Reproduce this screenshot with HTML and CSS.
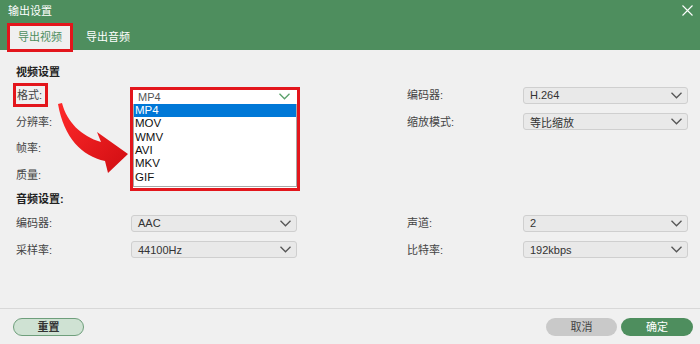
FILE: index.html
```html
<!DOCTYPE html>
<html lang="zh-CN">
<head>
<meta charset="utf-8">
<title>输出设置</title>
<link rel="stylesheet" href="styles.css">
</head>
<body>
<div class="dialog">
  <header class="titlebar">
    <div class="title-row">
      <span class="title">输出设置</span>
      <svg class="close" width="11" height="11" viewBox="0 0 11 11"><path d="M0.5 0.5 L10.5 10.5 M10.5 0.5 L0.5 10.5" stroke="#ffffff" stroke-width="1.1" fill="none"/></svg>
    </div>
    <div class="tabs">
      <div class="tab active">导出视频</div>
      <div class="tab">导出音频</div>
    </div>
  </header>

  <main class="content">
    <section class="group">
      <div class="group-title">视频设置</div>
      <div class="grid">
        <div class="label"><span class="mark">格式:</span></div>
        <div class="cell">
          <div class="select"><span>MP4</span><svg class="chev" width="11" height="7" viewBox="0 0 11 7"><path d="M0.5 0.8 L5.5 5.8 L10.5 0.8" stroke="#555" stroke-width="1.3" fill="none"/></svg></div>
          <div class="dropdown">
            <div class="dd-head"><span>MP4</span><svg width="11" height="7" viewBox="0 0 11 7"><path d="M0.5 0.8 L5.5 5.8 L10.5 0.8" stroke="#5aa06a" stroke-width="1.3" fill="none"/></svg></div>
            <ul class="dd-list">
              <li class="on">MP4</li>
              <li>MOV</li>
              <li>WMV</li>
              <li>AVI</li>
              <li>MKV</li>
              <li>GIF</li>
            </ul>
          </div>
        </div>
        <div></div>
        <div class="label">编码器:</div>
        <div class="select"><span>H.264</span><svg class="chev" width="11" height="7" viewBox="0 0 11 7"><path d="M0.5 0.8 L5.5 5.8 L10.5 0.8" stroke="#555" stroke-width="1.3" fill="none"/></svg></div>

        <div class="label">分辨率:</div>
        <div class="select"></div>
        <div></div>
        <div class="label">缩放模式:</div>
        <div class="select"><span>等比缩放</span><svg class="chev" width="11" height="7" viewBox="0 0 11 7"><path d="M0.5 0.8 L5.5 5.8 L10.5 0.8" stroke="#555" stroke-width="1.3" fill="none"/></svg></div>

        <div class="label">帧率:</div>
        <div class="select"></div>
        <div></div><div></div><div></div>

        <div class="label">质量:</div>
        <div class="select"></div>
        <div></div><div></div><div></div>
      </div>
    </section>

    <section class="group audio">
      <div class="group-title">音频设置:</div>
      <div class="grid">
        <div class="label">编码器:</div>
        <div class="select"><span>AAC</span><svg class="chev" width="11" height="7" viewBox="0 0 11 7"><path d="M0.5 0.8 L5.5 5.8 L10.5 0.8" stroke="#555" stroke-width="1.3" fill="none"/></svg></div>
        <div></div>
        <div class="label">声道:</div>
        <div class="select"><span>2</span><svg class="chev" width="11" height="7" viewBox="0 0 11 7"><path d="M0.5 0.8 L5.5 5.8 L10.5 0.8" stroke="#555" stroke-width="1.3" fill="none"/></svg></div>

        <div class="label">采样率:</div>
        <div class="select"><span>44100Hz</span><svg class="chev" width="11" height="7" viewBox="0 0 11 7"><path d="M0.5 0.8 L5.5 5.8 L10.5 0.8" stroke="#555" stroke-width="1.3" fill="none"/></svg></div>
        <div></div>
        <div class="label">比特率:</div>
        <div class="select"><span>192kbps</span><svg class="chev" width="11" height="7" viewBox="0 0 11 7"><path d="M0.5 0.8 L5.5 5.8 L10.5 0.8" stroke="#555" stroke-width="1.3" fill="none"/></svg></div>
      </div>
    </section>
  </main>

  <footer class="footer">
    <button class="btn reset">重置</button>
    <div class="spacer"></div>
    <button class="btn cancel">取消</button>
    <button class="btn ok">确定</button>
  </footer>

  <svg class="arrow" width="700" height="344" viewBox="0 0 700 344">
    <defs>
      <linearGradient id="ag" x1="0" y1="0" x2="1" y2="1">
        <stop offset="0" stop-color="#ff2a2a"/>
        <stop offset="1" stop-color="#d00d12"/>
      </linearGradient>
    </defs>
    <path d="M62 103 C67 122 81 136 101 142 L97 132 L128 154 L108 173 L105 161 C82 156 64 138 58 104 Z" fill="url(#ag)"/>
  </svg>
</div>
</body>
</html>
```

FILE: styles.css
```css
html, body {
  margin: 0;
  padding: 0;
}

body {
  font-family: "Liberation Sans", "Noto Sans CJK SC", sans-serif;
  background: #f0f0f0;
}

.dialog {
  width: 700px;
  height: 344px;
  display: flex;
  flex-direction: column;
  background: #f0f0f0;
  position: relative;
  overflow: hidden;
}

.titlebar {
  height: 50px;
  background: #4e8e5e;
  display: flex;
  flex-direction: column;
  flex: none;
}

.title-row {
  height: 23px;
  display: flex;
  justify-content: space-between;
  align-items: flex-start;
  padding: 0 7px 0 8px;
}

.title {
  color: #ffffff;
  font-size: 11px;
  line-height: 23px;
}

.close {
  margin-top: 5px;
}

.tabs {
  height: 27px;
  display: flex;
  align-items: flex-start;
  padding-left: 7px;
}

.tab {
  box-sizing: border-box;
  height: 29px;
  line-height: 23px;
  font-size: 11px;
  border: 3px solid transparent;
  padding: 0;
  color: #ffffff;
  position: relative;
  z-index: 2;
}

.tab + .tab {
  margin-left: 10px;
}

.tab.active {
  border-color: #e3161c;
  background: #f0f0f0;
  color: #4e8e5e;
  padding: 0 8px;
}

.content {
  flex: 1;
  padding: 12px 0 0 16px;
}

.group-title {
  font-size: 11px;
  font-weight: bold;
  line-height: 20px;
  color: #222222;
}

.audio .group-title {
  line-height: 22px;
}

.grid {
  display: grid;
  grid-template-columns: 115px 166px 110px 116px 165px;
  grid-auto-rows: 26.5px;
  align-items: center;
}

.label {
  font-size: 11px;
  color: #444444;
  line-height: 16px;
}

.mark {
  display: inline-block;
  border: 3px solid #e3161c;
  margin-left: -3px;
  padding: 0 3px 0 1px;
  line-height: 18px;
}

.cell {
  position: relative;
}

.select {
  box-sizing: border-box;
  height: 17px;
  border: 1px solid #cfcfcf;
  border-radius: 3px;
  background: #e9e9e9;
  display: flex;
  align-items: center;
  justify-content: space-between;
  padding: 0 5px 0 6px;
  font-size: 11px;
  color: #333333;
}

.dropdown {
  position: absolute;
  left: -1px;
  top: 0;
  width: 170px;
  height: 104px;
  box-sizing: border-box;
  border: 3px solid #e3161c;
  background: #ffffff;
  z-index: 3;
  display: flex;
  flex-direction: column;
}

.dd-head {
  height: 14px;
  flex: none;
  display: flex;
  align-items: center;
  justify-content: space-between;
  padding: 0 7px 0 5px;
  font-size: 11px;
  color: #555555;
}

.dd-list {
  list-style: none;
  margin: 0;
  padding: 0 0 2px 0;
  border: 1px solid #a8a8a8;
  border-top: none;
}

.dd-list li {
  height: 13.4px;
  line-height: 13.4px;
  font-size: 11.5px;
  color: #111111;
  padding-left: 1px;
}

.dd-list li.on {
  background: #0078d7;
  color: #ffffff;
}

.footer {
  height: 36px;
  flex: none;
  box-sizing: border-box;
  border-top: 1px solid #d8d8d8;
  display: flex;
  align-items: center;
  padding: 0 7px 0 13px;
  gap: 4px;
}

.spacer {
  flex: 1;
}

.btn {
  height: 18px;
  width: 71px;
  border-radius: 9px;
  border: none;
  font-family: "Liberation Sans", "Noto Sans CJK SC", sans-serif;
  font-size: 11px;
  line-height: 16px;
  padding: 0;
}

.reset {
  border: 1px solid #6f9f7c;
  background: #cfe2d3;
  color: #333333;
  font-weight: bold;
}

.cancel {
  background: #c9c9c9;
  color: #444444;
}

.ok {
  width: 72px;
  background: #4e8e5e;
  color: #ffffff;
}

.arrow {
  position: absolute;
  left: 0;
  top: 0;
  pointer-events: none;
  z-index: 5;
}
```
